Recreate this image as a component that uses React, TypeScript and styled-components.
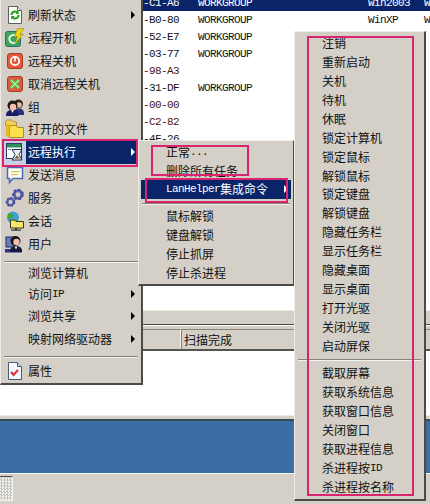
import React from "react";
import styled, { createGlobalStyle } from "styled-components";

const Global = createGlobalStyle`
  html, body { margin: 0; padding: 0; background: #fff; }
  #root { width: 430px; height: 504px; overflow: hidden; }
`;

const CJK = `"Noto Sans CJK SC", "Liberation Sans", sans-serif`;
const MONO = `"Liberation Mono", monospace`;
const FACE = "#d4d0c8";
const NAVY = "#0a246a";
const PINK = "#d9246f";

const Screen = styled.div`
  position: relative;
  width: 430px;
  height: 504px;
  overflow: hidden;
  display: flex;
  flex-direction: column;
  background: #fff;
  font-family: ${CJK};
  font-size: 12px;
  line-height: 14px;
  color: #111;
`;

/* ---------- background window ---------- */
const List = styled.div`
  height: 316px;
  flex: none;
  display: flex;
  flex-direction: column;
  margin-top: -6px;
  padding-left: 143px;
  overflow: hidden;
  background: #fff;
`;
const ListRow = styled.div<{ $sel?: boolean; $red?: boolean }>`
  height: 17.1px;
  flex: none;
  display: grid;
  grid-template-columns: 55px 170px 56px 6px;
  align-items: center;
  font-family: ${MONO};
  font-size: 11px;
  letter-spacing: -0.6px;
  white-space: nowrap;
  background: ${(p) => (p.$sel ? NAVY : "transparent")};
  color: ${(p) => (p.$sel ? "#fff" : p.$red ? "#4d1212" : "#111")};
`;
const Pane = styled.div`
  height: 13px;
  flex: none;
  background: ${FACE};
  border-top: 1px solid #efede6;
  border-bottom: 1px solid #4a4a44;
`;
const Status = styled.div`
  height: 26px;
  flex: none;
  display: flex;
  align-items: flex-end;
  padding-left: 143px;
  box-sizing: border-box;
  background: ${FACE};
  border-top: 1px solid #fff;
  border-bottom: 2px solid #55554f;
`;
const StatusCell = styled.div`
  height: 20px;
  width: 38px;
  flex: none;
  border-top: 1px solid #85827a;
  border-right: 1px solid #f4f3ee;
  box-sizing: border-box;
`;
const StatusText = styled.div`
  flex: 1;
  height: 20px;
  display: flex;
  align-items: center;
  padding-left: 2px;
  border-top: 1px solid #85827a;
  border-left: 1px solid #85827a;
  box-sizing: border-box;
`;
const Blank = styled.div`
  height: 64px;
  flex: none;
  background: #fff;
`;
const Rule = styled.div`
  height: 6px;
  flex: none;
  box-sizing: border-box;
  background: ${FACE};
  border-top: 1px solid #ecebe4;
  border-bottom: 2px solid #3b4a58;
`;
const Desktop = styled.div`
  height: 52px;
  flex: none;
  background: #3a6ea5;
`;
const Footer = styled.div`
  flex: 1;
  display: flex;
  align-items: flex-start;
  background: ${FACE};
  border-top: 1px solid #f6f6f2;
`;
const Hatch = styled.div`
  width: 12px;
  height: 23px;
  margin-top: 2px;
  border-top: 1px solid #5a4a4a;
  border-right: 1px solid #f2f1ec;
  border-bottom: 1px solid #f2f1ec;
  background: repeating-conic-gradient(#c4c2bc 0 25%, #f4f4f0 0 50%) 0 0 / 3px 3px;
`;

/* ---------- popup menus ---------- */
const Menu = styled.div<{ $x: number; $y: number; $w: number; $h: number; $pt: number }>`
  position: absolute;
  left: ${(p) => p.$x}px;
  top: ${(p) => p.$y}px;
  width: ${(p) => p.$w}px;
  height: ${(p) => p.$h}px;
  box-sizing: border-box;
  padding: ${(p) => p.$pt}px 2px 0 2px;
  background: ${FACE};
  border-top: 1px solid #efede6;
  border-left: 1px solid #efede6;
  border-right: 2px solid #4a4a46;
  border-bottom: 2px solid #4a4a46;
  display: flex;
  flex-direction: column;
`;
const Item = styled.div<{ $h: number }>`
  position: relative;
  height: ${(p) => p.$h}px;
  flex: none;
  display: flex;
  align-items: center;
  white-space: nowrap;
`;
const IconSlot = styled.span<{ $active?: boolean }>`
  width: 23px;
  height: 100%;
  flex: none;
  display: flex;
  align-items: center;
  justify-content: center;
  background: ${(p) => (p.$active ? "#c9cde6" : "transparent")};
`;
const Label = styled.span<{ $indent: number; $active?: boolean }>`
  position: relative;
  flex: 1;
  height: 100%;
  display: flex;
  align-items: center;
  padding-left: ${(p) => p.$indent}px;
  background: ${(p) => (p.$active ? NAVY : "transparent")};
  color: ${(p) => (p.$active ? "#fff" : "#111")};
`;
const Ascii = styled.span`
  font-family: ${MONO};
  font-size: 11px;
  letter-spacing: -0.6px;
`;
const Arrow = styled.span<{ $right: number; $active?: boolean }>`
  position: absolute;
  right: ${(p) => p.$right}px;
  top: 50%;
  margin-top: -4px;
  width: 0;
  height: 0;
  border-top: 4px solid transparent;
  border-bottom: 4px solid transparent;
  border-left: 4px solid ${(p) => (p.$active ? "#fff" : "#000")};
`;
const Separator = styled.div<{ $before: number; $after: number }>`
  flex: none;
  height: 1px;
  margin: ${(p) => p.$before}px 1px ${(p) => p.$after}px 1px;
  background: #85827a;
  border-bottom: 1px solid #f2f1ec;
`;
const Frame = styled.div<{ $x: number; $y: number; $w: number; $h: number }>`
  position: absolute;
  left: ${(p) => p.$x}px;
  top: ${(p) => p.$y}px;
  width: ${(p) => p.$w}px;
  height: ${(p) => p.$h}px;
  box-sizing: border-box;
  border: 2px solid ${PINK};
  pointer-events: none;
`;

/* ---------- icons ---------- */
const Svg = ({ children }: { children: React.ReactNode }) => (
  <svg width="20" height="20" viewBox="0 0 20 20">{children}</svg>
);
const IconRefresh = () => (
  <Svg>
    <path d="M3.500 1.500h9l4 4v13h-13z" fill="#fbfdf2" stroke="#55606a" />
    <path d="M12.500 1.500v4h4" fill="#dfe6c8" stroke="#55606a" />
    <path d="M6.500 10a3.500 3.500 0 0 1 6-2.500M13.500 10a3.500 3.500 0 0 1-6 2.500" fill="none" stroke="#2f9a2a" strokeWidth="2" />
    <path d="M13.800 5.500v3.500h-3.500zM6.200 14.500v-3.500h3.500z" fill="#2f9a2a" />
  </Svg>
);
const IconPowerOn = () => (
  <Svg>
    <rect x="0.500" y="3.500" width="15" height="15" rx="2" fill="#3ea55a" stroke="#2c6f6a" />
    <path d="M11 8a4 4 0 1 0 0 6" fill="none" stroke="#e6f6ea" strokeWidth="2" />
    <path d="M12.500 0.500h6.500l-4 6h3.500l-8.500 9 2.500-7h-3z" fill="#f5d20f" stroke="#8a7a10" strokeWidth="0.500" />
  </Svg>
);
const IconPowerOff = () => (
  <Svg>
    <rect x="2.500" y="2.500" width="15" height="15" rx="2.500" fill="#e25a38" stroke="#a83a28" />
    <circle cx="10" cy="10" r="4.200" fill="none" stroke="#fff" strokeWidth="1.800" />
    <rect x="9.200" y="6" width="1.600" height="4.500" fill="#fff" />
  </Svg>
);
const IconCancel = () => (
  <Svg>
    <rect x="2.500" y="2.500" width="15" height="15" rx="2.500" fill="#d95a3c" stroke="#a83a28" />
    <path d="M6 6l8 8M14 6l-8 8" stroke="#5fcf5a" strokeWidth="3.200" />
    <path d="M6 6l8 8M14 6l-8 8" stroke="#c9f5b8" strokeWidth="1" />
  </Svg>
);
const IconGroup = () => (
  <Svg>
    <circle cx="13.500" cy="7" r="4.500" fill="#30221c" />
    <circle cx="14" cy="8" r="2.800" fill="#f0b8a0" />
    <path d="M9 18c0-5 2-6.500 5-6.500s5 1.500 5 5v1.500z" fill="#2b2f7a" />
    <circle cx="7.500" cy="8.500" r="5" fill="#221a1a" />
    <circle cx="8" cy="10" r="3.200" fill="#f5c4b0" />
    <path d="M1 19c0-5 2.500-6 6.500-6s6 1.500 6 6z" fill="#1b1f62" />
    <path d="M6 13h3l-1.500 3z" fill="#e8e8f4" />
  </Svg>
);
const IconFolder = () => (
  <Svg>
    <path d="M0.500 5V2.500l2-1.500h4l2 2h3v4h-11z" fill="#f6d25a" stroke="#a8821a" strokeWidth="0.800" />
    <path d="M4.500 8.500l1.500-2h5l1.500 2h6v10h-14z" fill="#fbe24a" stroke="#a8821a" strokeWidth="0.900" />
    <path d="M1 5h3.500v13H3L1 16z" fill="#e8b82a" />
  </Svg>
);
const IconExec = () => (
  <Svg>
    <rect x="1.500" y="1.500" width="15" height="15" fill="#fff" stroke="#2c3f5f" />
    <rect x="2" y="2" width="14" height="3.500" fill="#2f8f5a" />
    <rect x="3" y="7" width="3" height="1" fill="#7a8aa0" />
    <path d="M7 7.500h10l-3 5 3 5.500H7l3-5.500z" fill="#e8edf5" stroke="#20304f" />
    <path d="M9 16.500h6l-3-3z" fill="#8a5a2a" />
  </Svg>
);
const IconBubble = () => (
  <Svg>
    <path d="M2.500 2.500h15v11H8l-3.500 4v-4h-2z" fill="#fbfbf2" stroke="#4a6ab8" strokeWidth="1.500" />
    <rect x="6" y="6" width="9" height="1.200" fill="#d8c24a" />
    <rect x="6" y="9" width="7" height="1.200" fill="#d8c24a" />
  </Svg>
);
const Gear = ({ cx, cy, r }: { cx: number; cy: number; r: number }) => (
  <g>
    <circle cx={cx} cy={cy} r={r} fill="none" stroke="#5a62b0" strokeWidth={r * 0.75} />
    <circle cx={cx} cy={cy} r={r * 1.3} fill="none" stroke="#3f4690" strokeWidth={r * 0.45} strokeDasharray={`${r * 0.6} ${r * 0.6}`} />
    <circle cx={cx} cy={cy} r={r * 0.45} fill="#d4d0c8" />
  </g>
);
const IconGears = () => (
  <Svg>
    <Gear cx={13} cy={6.5} r={3.8} />
    <Gear cx={5.5} cy={14} r={3.2} />
  </Svg>
);
const IconSession = () => (
  <Svg>
    <circle cx="8" cy="6.500" r="6" fill="#3aa0d8" />
    <path d="M3 3c3-2 5 0 5 2s-3 2-4 4c-1-1-2-4-1-6zM9 8c2 0 4 0 4 1s-2 2-3 2z" fill="#3da83a" />
    <path d="M5.500 9h4l1.500 1.500h7.500V17h-13z" fill="#f8e86a" stroke="#3a3420" />
    <rect x="10" y="17" width="2" height="2" fill="#3a3420" />
    <rect x="6" y="18.500" width="10" height="1.200" fill="#3a3420" />
  </Svg>
);
const IconUser = () => (
  <Svg>
    <rect x="1" y="3" width="9" height="10" fill="#6a7ac0" stroke="#1e2a5a" />
    <rect x="0" y="15" width="17" height="3.500" fill="#28348a" />
    <circle cx="10.500" cy="7" r="5" fill="#1c1414" />
    <circle cx="11.500" cy="8" r="3.200" fill="#f2c0a8" />
    <path d="M5 18c0-4 2-6 6-6s6 2 6 6z" fill="#161a3a" />
    <path d="M9.500 12.500h3l-1.500 3z" fill="#f0f0f6" />
  </Svg>
);
const IconProps = () => (
  <Svg>
    <path d="M3.500 1.500h9l4 4v13h-13z" fill="#f4f8fc" stroke="#4a5a7a" />
    <path d="M12.500 1.500v4h4" fill="#c8d4e8" stroke="#4a5a7a" />
    <path d="M6 11l2.500 3 4.500-5" fill="none" stroke="#e02a3a" strokeWidth="2" />
  </Svg>
);

/* ---------- data ---------- */
const rows: [string, string, string, string, boolean?, boolean?][] = [
  ["-C1-A6", "WORKGROUP", "Win2003", "W", true],
  ["-B0-80", "WORKGROUP", "WinXP", "W"],
  ["-52-E7", "WORKGROUP", "", ""],
  ["-03-77", "WORKGROUP", "", ""],
  ["-98-A3", "", "", "", false, true],
  ["-31-DF", "WORKGROUP", "", ""],
  ["-00-00", "", "", "", false, true],
  ["-C2-82", "", "", "", false, true],
  ["-4F-26", "", "", ""],
];

const iconRows: [React.ReactNode, string, boolean?][] = [
  [<IconRefresh />, "刷新状态", true],
  [<IconPowerOn />, "远程开机"],
  [<IconPowerOff />, "远程关机"],
  [<IconCancel />, "取消远程关机"],
  [<IconGroup />, "组"],
  [<IconFolder />, "打开的文件"],
];
const iconRows2: [React.ReactNode, string][] = [
  [<IconBubble />, "发送消息"],
  [<IconGears />, "服务"],
  [<IconSession />, "会话"],
  [<IconUser />, "用户"],
];
const sub2 = ["鼠标解锁", "键盘解锁", "停止抓屏", "停止杀进程"];
const right1 = [
  "注销", "重新启动", "关机", "待机", "休眠", "锁定计算机", "锁定鼠标", "解锁鼠标", "锁定键盘",
  "解锁键盘", "隐藏任务栏", "显示任务栏", "隐藏桌面", "显示桌面", "打开光驱", "关闭光驱", "启动屏保",
];
const right2 = ["截取屏幕", "获取系统信息", "获取窗口信息", "关闭窗口", "获取进程信息"];

const RH = 18.94;

export default function App() {
  return (
    <Screen>
      <Global />
      <List>
        {rows.map((r, i) => (
          <ListRow key={i} $sel={r[4]} $red={r[5]}>
            <span>{r[0]}</span>
            <span>{r[1]}</span>
            <span>{r[2]}</span>
            <span>{r[3]}</span>
          </ListRow>
        ))}
      </List>
      <Pane />
      <Status>
        <StatusCell />
        <StatusText>扫描完成</StatusText>
      </Status>
      <Blank />
      <Rule />
      <Desktop />
      <Footer>
        <Hatch />
      </Footer>

      <Menu $x={0} $y={-1} $w={143} $h={386} $pt={3.5}>
        {iconRows.map(([icon, label, arrow], i) => (
          <Item key={i} $h={22.9}>
            <IconSlot>{icon}</IconSlot>
            <Label $indent={2}>
              {label}
              {arrow && <Arrow $right={4} />}
            </Label>
          </Item>
        ))}
        <Item $h={23}>
          <IconSlot $active><IconExec /></IconSlot>
          <Label $indent={2} $active>
            远程执行
            <Arrow $right={4} $active />
          </Label>
        </Item>
        {iconRows2.map(([icon, label], i) => (
          <Item key={i} $h={22.9}>
            <IconSlot>{icon}</IconSlot>
            <Label $indent={2}>{label}</Label>
          </Item>
        ))}
        <Separator $before={6} $after={0} />
        <Item $h={20}><Label $indent={25}>浏览计算机</Label></Item>
        <Item $h={21}><Label $indent={25}>访问<Ascii>IP</Ascii><Arrow $right={4} /></Label></Item>
        <Item $h={23}><Label $indent={25}>浏览共享<Arrow $right={4} /></Label></Item>
        <Item $h={24}><Label $indent={25}>映射网络驱动器<Arrow $right={4} /></Label></Item>
        <Separator $before={5} $after={1} />
        <Item $h={23}>
          <IconSlot><IconProps /></IconSlot>
          <Label $indent={2}>属性</Label>
        </Item>
      </Menu>

      <Menu $x={138} $y={140} $w={157} $h={146} $pt={1.5}>
        <Item $h={18.7}><Label $indent={25}>正常<Ascii>...</Ascii></Label></Item>
        <Item $h={18.7}><Label $indent={25}>删除所有任务</Label></Item>
        <Item $h={18.7}>
          <Label $indent={25} $active>
            <Ascii>LanHelper</Ascii>集成命令
            <Arrow $right={3} $active />
          </Label>
        </Item>
        <Separator $before={4} $after={2} />
        {sub2.map((t) => (
          <Item key={t} $h={19}><Label $indent={25}>{t}</Label></Item>
        ))}
      </Menu>

      <Menu $x={294} $y={31} $w={132} $h={470} $pt={1.5}>
        {right1.map((t) => (
          <Item key={t} $h={RH}><Label $indent={25}>{t}</Label></Item>
        ))}
        <Separator $before={4} $after={2} />
        {right2.map((t) => (
          <Item key={t} $h={RH}><Label $indent={25}>{t}</Label></Item>
        ))}
        <Item $h={RH}><Label $indent={25}>杀进程按<Ascii>ID</Ascii></Label></Item>
        <Item $h={RH}><Label $indent={25}>杀进程按名称</Label></Item>
      </Menu>

      <Frame $x={2} $y={139} $w={136} $h={28} />
      <Frame $x={151} $y={145} $w={98} $h={31} />
      <Frame $x={145} $y={178} $w={143} $h={25} />
      <Frame $x={307} $y={36} $w={107} $h={460} />
    </Screen>
  );
}
